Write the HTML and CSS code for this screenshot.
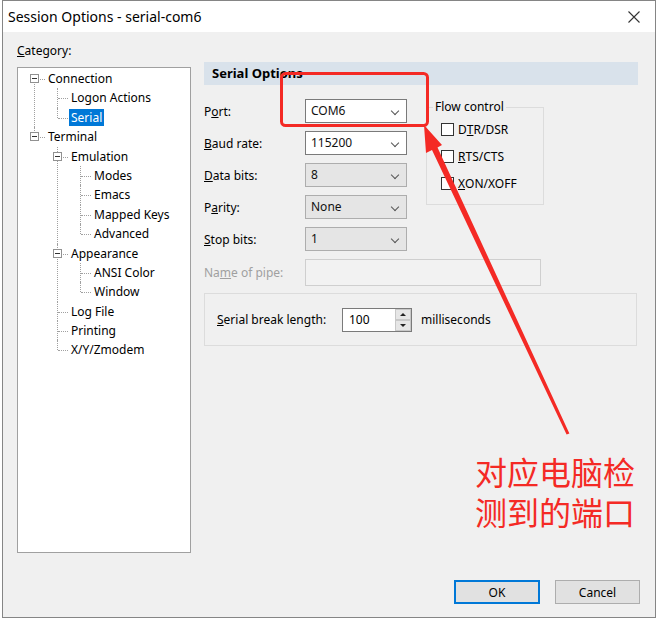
FILE: index.html
```html
<!DOCTYPE html>
<html lang="zh-CN">

<head>
  <meta charset="UTF-8">
  <meta name="viewport" content="width=device-width, initial-scale=1.0">
  <title>Session Options - serial-com6</title>
  <link rel="stylesheet" href="styles.css">
</head>

<body>
  <div class="window">
    <div class="titlebar">
      <span class="title">Session Options - serial-com6</span>
      <svg class="close" width="12" height="12" viewBox="0 0 12 12">
        <path d="M0.5 0.5 L11.5 11.5 M11.5 0.5 L0.5 11.5" stroke="#333" stroke-width="1.1" fill="none" />
      </svg>
    </div>

    <div class="main">
      <!-- 左侧分类树 -->
      <div class="category">
        <div class="category-label"><u>C</u>ategory:</div>
        <div class="tree-box">
          <ul class="tree">
            <li><span class="exp"></span><span class="node">Connection</span>
              <ul>
                <li><span class="node">Logon Actions</span></li>
                <li><span class="node selected">Serial</span></li>
              </ul>
            </li>
            <li><span class="exp"></span><span class="node">Terminal</span>
              <ul>
                <li><span class="exp"></span><span class="node">Emulation</span>
                  <ul>
                    <li><span class="node">Modes</span></li>
                    <li><span class="node">Emacs</span></li>
                    <li><span class="node">Mapped Keys</span></li>
                    <li><span class="node">Advanced</span></li>
                  </ul>
                </li>
                <li><span class="exp"></span><span class="node">Appearance</span>
                  <ul>
                    <li><span class="node">ANSI Color</span></li>
                    <li><span class="node">Window</span></li>
                  </ul>
                </li>
                <li><span class="node">Log File</span></li>
                <li><span class="node">Printing</span></li>
                <li><span class="node">X/Y/Zmodem</span></li>
              </ul>
            </li>
          </ul>
        </div>
      </div>

      <!-- 右侧串口设置 -->
      <div class="panel">
        <div class="panel-header">Serial Options</div>

        <div class="form">
          <label class="field-label">P<u>o</u>rt:</label>
          <div class="combo edit">COM6<span class="chev"></span></div>

          <fieldset class="flow">
            <legend>Flow control</legend>
            <div class="checks">
              <div class="check"><span class="box"></span>D<u>T</u>R/DSR</div>
              <div class="check"><span class="box"></span><u>R</u>TS/CTS</div>
              <div class="check"><span class="box"></span><u>X</u>ON/XOFF</div>
            </div>
          </fieldset>

          <label class="field-label"><u>B</u>aud rate:</label>
          <div class="combo edit">115200<span class="chev"></span></div>

          <label class="field-label"><u>D</u>ata bits:</label>
          <div class="combo">8<span class="chev"></span></div>

          <label class="field-label">P<u>a</u>rity:</label>
          <div class="combo">None<span class="chev"></span></div>

          <label class="field-label"><u>S</u>top bits:</label>
          <div class="combo">1<span class="chev"></span></div>

          <label class="field-label disabled">Na<u>m</u>e of pipe:</label>
          <div class="pipe"></div>
        </div>

        <div class="break-group">
          <span class="break-label"><u>S</u>erial break length:</span>
          <div class="spin">
            <span class="spin-value">100</span>
            <div class="spin-btns">
              <span class="spin-btn up"></span>
              <span class="spin-btn down"></span>
            </div>
          </div>
          <span class="unit">milliseconds</span>
        </div>
      </div>
    </div>

    <div class="footer">
      <button class="btn default">OK</button>
      <button class="btn">Cancel</button>
    </div>
  </div>

  <!-- 标注层 -->
  <div class="annot">
    <svg width="660" height="622" viewBox="0 0 660 622">
      <rect x="281.5" y="73.5" width="146" height="52" rx="4" fill="none" stroke="#f42a25" stroke-width="3" />
      <polygon fill="#f42a25"
        points="424,125 442,145 437.5,147.5 569.4,433.4 566.6,434.6 432,150 426,153" />
    </svg>
    <div class="note">
      <div class="note-line">对应电脑检</div>
      <div class="note-line">测到的端口</div>
    </div>
  </div>
</body>

</html>
```

FILE: styles.css
```css
body {
  margin: 0;
  width: 660px;
  height: 622px;
  position: relative;
  overflow: hidden;
  background: #fff;
  font-family: 'Noto Sans', 'Open Sans', sans-serif;
  font-size: 12px;
  color: #000;
}

.window {
  margin-left: 2px;
  width: 654px;
  height: 618px;
  box-sizing: border-box;
  border: 1px solid #858585;
  background: #f0f0f0;
}

.titlebar {
  height: 31px;
  background: #fff;
  display: flex;
  align-items: center;
  justify-content: space-between;
  padding: 0 15px 0 5px;
}

.title {
  font-size: 14px;
}

.main {
  display: flex;
  gap: 13px;
  padding: 0 17px 0 14px;
}

.category {
  width: 174px;
  flex: none;
}

.category-label {
  padding-top: 11px;
  line-height: 16px;
  margin-bottom: 8px;
}

.tree-box {
  height: 486px;
  box-sizing: border-box;
  border: 1px solid #a0a0a0;
  background: #fff;
  padding-top: 1px;
}

/* 树形列表 */
.tree,
.tree ul {
  list-style: none;
  margin: 0;
  padding: 0;
}

.tree {
  padding-left: 16px;
}

.tree ul {
  margin-left: 11px;
}

.tree li {
  position: relative;
  padding-left: 12px;
}

.tree li::before {
  content: "";
  position: absolute;
  left: 0;
  top: 0;
  bottom: 0;
  border-left: 1px dotted #a0a0a0;
}

.tree li:last-child::before {
  bottom: auto;
  height: 10px;
}

.tree > li:first-child::before {
  top: 10px;
  bottom: 0;
  height: auto;
}

.tree li::after {
  content: "";
  position: absolute;
  left: 1px;
  top: 10px;
  width: 10px;
  border-top: 1px dotted #a0a0a0;
}

.exp {
  position: absolute;
  left: -4px;
  top: 5px;
  width: 9px;
  height: 9px;
  box-sizing: border-box;
  border: 1px solid #919191;
  background: #fff;
  z-index: 1;
}

.exp::after {
  content: "";
  position: absolute;
  left: 1px;
  top: 3px;
  width: 5px;
  height: 1px;
  background: #333;
}

.node {
  display: block;
  width: max-content;
  height: 19.4px;
  line-height: 19.4px;
  padding: 0 2px;
}

.node.selected {
  color: #fff;
  background: linear-gradient(transparent 1px, #0078d7 1px, #0078d7 calc(100% - 1px), transparent calc(100% - 1px));
}

/* 右侧面板 */
.panel {
  flex: 1;
  margin-top: 30px;
}

.panel-header {
  height: 23px;
  line-height: 23px;
  padding-left: 8px;
  background: #d9e2eb;
  font-weight: bold;
  font-size: 13px;
}

.form {
  margin-top: 14px;
  display: grid;
  grid-template-columns: 101px 102px 1fr;
  grid-template-rows: repeat(5, 24px) 27px;
  row-gap: 8px;
  align-items: center;
}

.field-label {
  grid-column: 1;
}

.field-label.disabled {
  color: #a0a0a0;
}

.combo {
  grid-column: 2;
  height: 24px;
  box-sizing: border-box;
  border: 1px solid #adadad;
  background: #e5e5e5;
  padding-left: 5px;
  line-height: 22px;
  position: relative;
  color: #111;
}

.combo.edit {
  background: #fff;
  border-color: #7a7a7a;
}

.chev {
  position: absolute;
  right: 8px;
  top: 8px;
  width: 5px;
  height: 5px;
  border-right: 1px solid #555;
  border-bottom: 1px solid #555;
  transform: rotate(45deg);
}

.pipe {
  grid-column: 2 / 4;
  width: 236px;
  height: 27px;
  box-sizing: border-box;
  border: 1px solid #cfcfcf;
  background: #f2f2f2;
}

.flow {
  grid-column: 3;
  grid-row: 1 / 5;
  align-self: start;
  margin: 0 0 0 19px;
  padding: 0;
  width: 118px;
  height: 106px;
  box-sizing: border-box;
  border: 1px solid #dcdcdc;
}

.flow legend {
  margin-left: 6px;
  padding: 0 2px;
  line-height: 16px;
}

.checks {
  padding: 1px 0 0 14px;
}

.check {
  height: 27px;
  display: flex;
  align-items: center;
}

.box {
  width: 13px;
  height: 13px;
  box-sizing: border-box;
  border: 1px solid #333;
  background: #fff;
  margin-right: 4px;
}

.break-group {
  margin-top: 7px;
  margin-right: 1px;
  height: 53px;
  box-sizing: border-box;
  border: 1px solid #dcdcdc;
  display: flex;
  align-items: center;
  padding-left: 12px;
}

.break-label {
  width: 125px;
}

.spin {
  width: 70px;
  height: 24px;
  box-sizing: border-box;
  border: 1px solid #7a7a7a;
  background: #fff;
  display: flex;
}

.spin-value {
  flex: 1;
  padding-left: 6px;
  line-height: 22px;
}

.spin-btns {
  width: 16px;
  display: flex;
  flex-direction: column;
}

.spin-btn {
  flex: 1;
  background: #e6e6e6;
  border: 1px solid #c8c8c8;
  position: relative;
}

.spin-btn::after {
  content: "";
  position: absolute;
  left: 4px;
  border-left: 3px solid transparent;
  border-right: 3px solid transparent;
}

.spin-btn.up::after {
  top: 3px;
  border-bottom: 3px solid #222;
}

.spin-btn.down::after {
  top: 3px;
  border-top: 3px solid #222;
}

.unit {
  margin-left: 9px;
}

.footer {
  margin-top: 27px;
  display: flex;
  justify-content: flex-end;
  gap: 15px;
  padding-right: 15px;
}

.btn {
  width: 85px;
  height: 24px;
  box-sizing: border-box;
  border: 1px solid #adadad;
  background: #e1e1e1;
  font-family: inherit;
  font-size: 12px;
  color: #000;
  padding: 0;
}

.btn.default {
  width: 86px;
  border: 2px solid #0078d7;
}

/* 红色标注 */
.annot {
  position: absolute;
  left: 0;
  top: 0;
  width: 660px;
  height: 622px;
  pointer-events: none;
}

.annot svg {
  position: absolute;
  left: 0;
  top: 0;
}

.note {
  position: absolute;
  left: 475px;
  top: 451px;
  font-family: 'Noto Sans CJK SC', sans-serif;
  font-size: 32px;
  color: #f42a25;
}

.note-line {
  height: 40px;
  line-height: 40px;
}
```
